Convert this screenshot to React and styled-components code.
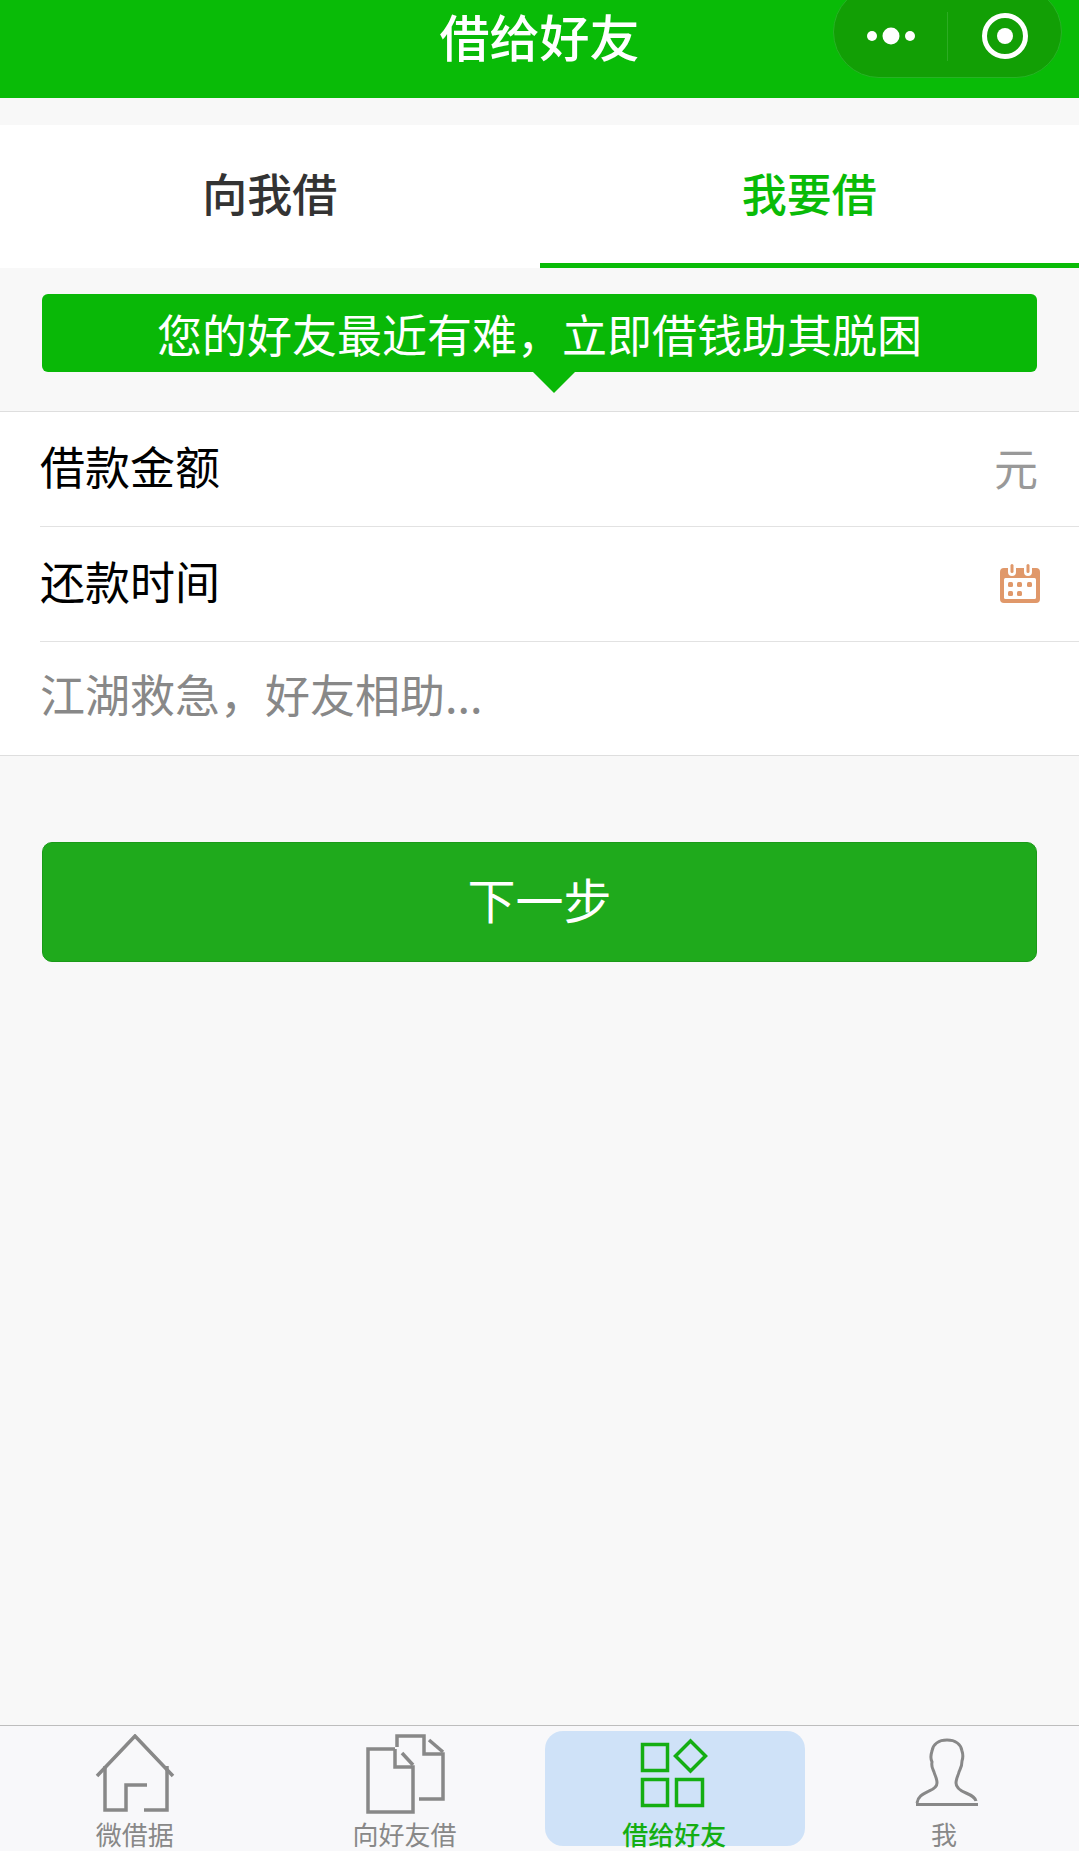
import React from 'react';
import styled, { createGlobalStyle } from 'styled-components';

const GlobalStyle = createGlobalStyle`
  html, body { margin: 0; padding: 0; background: #f8f8f8; }
  body { font-family: "Noto Sans CJK SC", "Noto Sans", sans-serif; }
`;

const Page = styled.div`
  width: 1079px;
  height: 1851px;
  display: flex;
  flex-direction: column;
  overflow: hidden;
  background: #f8f8f8;
`;

const NavBar = styled.header`
  position: relative;
  height: 98px;
  flex-shrink: 0;
  background: #09bb07;
  display: flex;
  justify-content: center;
  color: #fff;
`;

const NavTitle = styled.h1`
  margin: 0;
  font-size: 50px;
  font-weight: 500;
  line-height: 70px;
`;

const Capsule = styled.div`
  position: absolute;
  left: 833px;
  top: -14px;
  width: 229px;
  height: 92px;
  box-sizing: border-box;
  border: 1px solid #27b325;
  border-radius: 46px;
  background: #129f05;
  display: flex;
  align-items: center;
  padding-top: 8px;
`;

const CapsuleHalf = styled.div`
  flex: 1;
  display: flex;
  align-items: center;
  justify-content: center;
  height: 49px;
  & + & { border-left: 1px solid #2dac24; }
`;

const Tabs = styled.nav`
  margin-top: 27px;
  height: 143px;
  flex-shrink: 0;
  background: #fff;
  display: flex;
`;

const TabItem = styled.div`
  flex: 1;
  display: flex;
  align-items: center;
  justify-content: center;
  font-size: 45px;
  font-weight: 500;
  padding-bottom: 4px;
  color: ${(p) => (p.$active ? '#09bb07' : '#333')};
  border-bottom: 5px solid ${(p) => (p.$active ? '#09bb07' : 'transparent')};
`;

const Notice = styled.div`
  position: relative;
  margin: 26px 42px 39px;
  height: 78px;
  flex-shrink: 0;
  border-radius: 6px;
  background: #09b807;
  color: #fff;
  font-size: 45px;
  line-height: 80px;
  text-align: center;
  white-space: nowrap;

  &::after {
    content: '';
    position: absolute;
    left: 491px;
    top: 78px;
    border-left: 21px solid transparent;
    border-right: 21px solid transparent;
    border-top: 21px solid #09b807;
  }
`;

const Form = styled.section`
  flex-shrink: 0;
  background: #fff;
  border-top: 1px solid #dedede;
  border-bottom: 1px solid #dedede;
  padding-left: 40px;
`;

const Row = styled.div`
  height: 114px;
  display: flex;
  align-items: center;
  justify-content: space-between;
  padding-right: 39px;
  & + & { border-top: 1px solid #e2e2e2; }
  &:last-child { height: 113px; }
`;

const Label = styled.span`
  font-size: 45px;
  padding-bottom: ${(p) => (p.$placeholder ? '10px' : '7px')};
  color: ${(p) => (p.$placeholder ? '#888' : '#000')};
`;

const Unit = styled.span`
  font-size: 44px;
  color: #999;
  margin-right: 2px;
  padding-bottom: 4px;
`;

const NextButton = styled.button`
  display: block;
  margin: 86px 42px 0;
  height: 120px;
  flex-shrink: 0;
  box-sizing: border-box;
  border: 1px solid #1a9a18;
  border-radius: 10px;
  background: #1faa1c;
  color: #fff;
  font-family: inherit;
  font-size: 48px;
  padding: 0 0 8px;
`;

const Spacer = styled.div`
  flex: 1;
`;

const TabBar = styled.footer`
  height: 126px;
  flex-shrink: 0;
  box-sizing: border-box;
  border-top: 1px solid #bdbdbd;
  background: #f8f8fa;
  display: grid;
  grid-template-columns: repeat(4, 1fr);
`;

const BarItem = styled.div`
  position: relative;
  display: flex;
  flex-direction: column;
  align-items: center;
  padding-top: 8px;
  color: ${(p) => (p.$active ? '#14ae12' : '#888')};

  ${(p) =>
    p.$active &&
    `&::before {
      content: '';
      position: absolute;
      left: 5px;
      right: 4px;
      top: 5px;
      bottom: 5px;
      border-radius: 18px;
      background: #cfe2f8;
    }`}

  svg { position: relative; display: block; }
`;

const BarLabel = styled.span`
  position: relative;
  font-size: 26px;
  line-height: 26px;
  margin-top: 7px;
  font-weight: ${(p) => (p.$active ? 500 : 400)};
`;

const MoreIcon = () => (
  <svg width="60" height="20" viewBox="0 0 60 20" fill="#fff">
    <circle cx="11" cy="10" r="5" />
    <circle cx="30" cy="10" r="8.5" />
    <circle cx="49" cy="10" r="5" />
  </svg>
);

const RingIcon = () => (
  <svg width="48" height="48" viewBox="0 0 48 48" fill="none">
    <circle cx="24" cy="24" r="20.5" stroke="#fff" strokeWidth="5" />
    <circle cx="24" cy="24" r="8" fill="#fff" />
  </svg>
);

const CalendarIcon = () => (
  <svg width="40" height="40" viewBox="0 0 40 40">
    <path
      fill="#e0986a"
      d="M4 4h4v4a4 4 0 0 0 8 0V4h8v4a4 4 0 0 0 8 0V4h4a4 4 0 0 1 4 4v27a4 4 0 0 1-4 4H4a4 4 0 0 1-4-4V8a4 4 0 0 1 4-4z"
    />
    <rect x="4" y="14" width="32" height="21" rx="1.5" fill="#fff" />
    <rect x="10.500" y="0" width="3" height="9" rx="1.5" fill="#e0986a" />
    <rect x="26.500" y="0" width="3" height="9" rx="1.5" fill="#e0986a" />
    <g fill="#e0986a">
      <rect x="8" y="18" width="5" height="5" rx="1.5" />
      <rect x="17" y="18" width="5" height="5" rx="1.5" />
      <rect x="27" y="18" width="5" height="5" rx="1.5" />
      <rect x="8" y="27" width="5" height="5" rx="1.5" />
      <rect x="17" y="27" width="5" height="5" rx="1.5" />
    </g>
  </svg>
);

const HomeIcon = () => (
  <svg width="80" height="80" viewBox="0 0 80 80" fill="none" stroke="currentColor" strokeWidth="3.5">
    <path d="M2 42 40 2l38 40" />
    <path d="M10 32v44h21V51h21" />
    <path d="M49 76h23V32" />
  </svg>
);

const DocsIcon = () => (
  <svg width="80" height="80" viewBox="0 0 80 80" fill="none" stroke="currentColor" strokeWidth="3.5">
    <path d="M30 15H3v63h45V33H30V15" />
    <path d="m37 19 11 12" />
    <path d="M32 13V2h27v18h19v45H54" />
    <path d="m64 6 14 12" />
  </svg>
);

const GridIcon = () => (
  <svg width="80" height="80" viewBox="0 0 80 80" fill="none" stroke="currentColor" strokeWidth="3.5">
    <rect x="8.500" y="10.500" width="25" height="26" />
    <rect x="8.500" y="45.500" width="25" height="26" />
    <rect x="42.500" y="45.500" width="26" height="26" />
    <path d="m56.500 7 15 15-15 15-15-15z" />
  </svg>
);

const PersonIcon = () => (
  <svg width="80" height="80" viewBox="0 0 80 80" fill="none" stroke="currentColor" strokeWidth="3">
    <path d="M13 69C14 62 19 60 25 57C30 55 33 53 33 49C33 44 31 42 30 38C29 35 27 33 28 28C26 24 27 20 28 17C29 10 35 6 43 6C51 6 57 10 58 17C59 20 59 24 58 27C58 33 56 35 55 38C54 42 52 45 52 49C52 54 57 57 62 59C67 61 71 63 72 67" />
    <path d="M12 70.500H74" />
  </svg>
);

const App = () => {
  return (
    <Page>
      <GlobalStyle />
      <NavBar>
        <NavTitle>借给好友</NavTitle>
        <Capsule>
          <CapsuleHalf><MoreIcon /></CapsuleHalf>
          <CapsuleHalf><RingIcon /></CapsuleHalf>
        </Capsule>
      </NavBar>

      <Tabs>
        <TabItem>向我借</TabItem>
        <TabItem $active>我要借</TabItem>
      </Tabs>

      <Notice>您的好友最近有难，立即借钱助其脱困</Notice>

      <Form>
        <Row>
          <Label>借款金额</Label>
          <Unit>元</Unit>
        </Row>
        <Row>
          <Label>还款时间</Label>
          <CalendarIcon />
        </Row>
        <Row>
          <Label $placeholder>江湖救急，好友相助...</Label>
        </Row>
      </Form>

      <NextButton>下一步</NextButton>
      <Spacer />

      <TabBar>
        <BarItem><HomeIcon /><BarLabel>微借据</BarLabel></BarItem>
        <BarItem><DocsIcon /><BarLabel>向好友借</BarLabel></BarItem>
        <BarItem $active><GridIcon /><BarLabel $active>借给好友</BarLabel></BarItem>
        <BarItem><PersonIcon /><BarLabel>我</BarLabel></BarItem>
      </TabBar>
    </Page>
  );
};

export default App;
